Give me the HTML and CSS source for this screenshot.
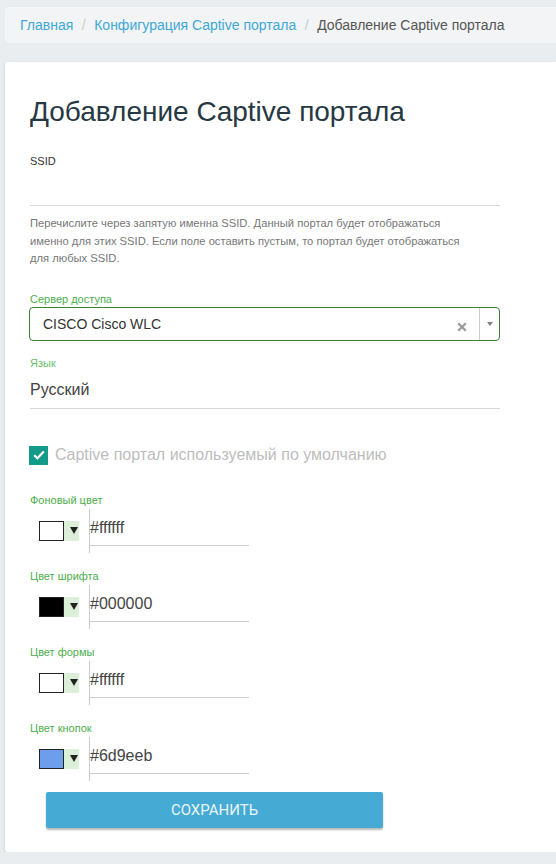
FILE: index.html
```html
<!DOCTYPE html>
<html lang="ru">
<head>
<meta charset="utf-8">
<title>Добавление Captive портала</title>
<link rel="stylesheet" href="styles.css">
</head>
<body>
<nav class="crumbs">
  <a href="#">Главная</a>
  <span class="sep">/</span>
  <a href="#">Конфигурация Captive портала</a>
  <span class="sep">/</span>
  <span class="current">Добавление Captive портала</span>
</nav>

<main class="card">
  <h1 class="title">Добавление Captive портала</h1>

  <div class="field field-ssid">
    <label class="label label-dark">SSID</label>
    <div class="line-input"></div>
    <p class="help">Перечислите через запятую именна SSID. Данный портал будет отображаться именно для этих SSID. Если поле оставить пустым, то портал будет отображаться для любых SSID.</p>
  </div>

  <div class="field field-server">
    <label class="label">Сервер доступа</label>
    <div class="select">
      <span class="select-value">CISCO Cisco WLC</span>
      <span class="select-clear">
        <svg width="10" height="10" viewBox="0 0 10 10"><path d="M1.2 1.2 L8.8 8.8 M8.8 1.2 L1.2 8.8" stroke="#9a9a9a" stroke-width="2.2" fill="none"/></svg>
      </span>
      <span class="select-arrow"><span class="caret"></span></span>
    </div>
  </div>

  <div class="field field-lang">
    <label class="label label-light">Язык</label>
    <div class="line-input lang-value">Русский</div>
  </div>

  <div class="check-row">
    <span class="checkbox">
      <svg width="12" height="10" viewBox="0 0 12 10"><path d="M1.2 5.2 L4.4 8.2 L10.8 1.6" fill="none" stroke="#fff" stroke-width="2.2"/></svg>
    </span>
    <span class="check-label">Captive портал используемый по умолчанию</span>
  </div>

  <div class="color-field">
    <label class="label">Фоновый цвет</label>
    <div class="color-row">
      <div class="picker"><span class="swatch" style="background:#ffffff"></span><span class="picker-btn"><span class="picker-caret"></span></span></div>
      <div class="color-input"><div class="color-value">#ffffff</div></div>
    </div>
  </div>

  <div class="color-field">
    <label class="label">Цвет шрифта</label>
    <div class="color-row">
      <div class="picker"><span class="swatch" style="background:#000000"></span><span class="picker-btn"><span class="picker-caret"></span></span></div>
      <div class="color-input"><div class="color-value">#000000</div></div>
    </div>
  </div>

  <div class="color-field">
    <label class="label">Цвет формы</label>
    <div class="color-row">
      <div class="picker"><span class="swatch" style="background:#ffffff"></span><span class="picker-btn"><span class="picker-caret"></span></span></div>
      <div class="color-input"><div class="color-value">#ffffff</div></div>
    </div>
  </div>

  <div class="color-field">
    <label class="label">Цвет кнопок</label>
    <div class="color-row">
      <div class="picker"><span class="swatch" style="background:#6d9eeb"></span><span class="picker-btn"><span class="picker-caret"></span></span></div>
      <div class="color-input"><div class="color-value">#6d9eeb</div></div>
    </div>
  </div>

  <button class="save" type="button">СОХРАНИТЬ</button>
</main>
</body>
</html>
```

FILE: styles.css
```css
* { box-sizing: border-box; }

html, body {
  margin: 0;
  padding: 0;
}

body {
  background: #e9edf0;
  font-family: "Liberation Sans", Arial, sans-serif;
  color: #333;
  overflow: hidden;
}

/* breadcrumb bar */
.crumbs {
  margin: 7px 0 0 5px;
  height: 36px;
  padding: 0 15px;
  display: flex;
  align-items: center;
  background: #f3f4f5;
  border-radius: 4px 0 0 4px;
  font-size: 14px;
  white-space: nowrap;
}
.crumbs a {
  color: #3ea8d8;
  text-decoration: none;
}
.crumbs .sep {
  color: #ccc;
  padding: 0 8.5px;
}
.crumbs .current {
  color: #555;
}

/* main card */
.card {
  margin: 19px 0 0 5px;
  height: 790px;
  padding: 32px 0 0 25px;
  background: #fff;
  border-radius: 3px 0 0 3px;
  box-shadow: 0 1px 3px rgba(0, 0, 0, 0.15);
}

.title {
  margin: 0;
  font-size: 28px;
  font-weight: normal;
  line-height: 36px;
  color: #263843;
}

.label {
  display: block;
  font-size: 11px;
  line-height: 14px;
  color: #4cae4c;
}
.label-dark { color: #333; }
.label-light { color: #69c16a; }

.field { width: 470px; }

/* SSID */
.field-ssid { margin-top: 24px; }
.line-input {
  border-bottom: 1px solid #d6d6d6;
}
.field-ssid .line-input { height: 38px; }

.help {
  margin: 9px 0 0;
  width: 440px;
  font-size: 11.2px;
  line-height: 17.5px;
  color: #777;
}

/* access server select */
.field-server { margin-top: 24px; }
.select {
  margin-top: 1px;
  margin-left: -1px;
  width: 471px;
  height: 34px;
  border: 1px solid #3b7f3b;
  border-radius: 4px;
  display: flex;
  align-items: center;
}
.select-value {
  flex: 1;
  padding-left: 13px;
  font-size: 14px;
  color: #333;
}
.select-clear {
  width: 35px;
  height: 10px;
  margin-top: 6px;
  display: flex;
  justify-content: flex-start;
  padding-left: 13px;
}
.select-clear svg { display: block; }
.select-arrow {
  width: 20px;
  align-self: stretch;
  border-left: 1px solid #ccc;
  display: flex;
  align-items: center;
  justify-content: center;
}
.caret {
  width: 0;
  height: 0;
  border-left: 3.5px solid transparent;
  border-right: 3.5px solid transparent;
  border-top: 4px solid #808080;
}

/* language */
.field-lang { margin-top: 15px; }
.lang-value {
  height: 39px;
  padding-top: 11px;
  font-size: 16px;
  line-height: 18px;
  color: #444;
}

/* default checkbox */
.check-row {
  margin-top: 37px;
  margin-left: -1px;
  display: flex;
  align-items: center;
  gap: 7px;
}
.checkbox {
  width: 19px;
  height: 19px;
  background: #149a89;
  display: flex;
  align-items: center;
  justify-content: center;
}
.check-label {
  font-size: 16px;
  line-height: 18px;
  color: #bdbdbd;
}

/* colour pickers */
.color-field { margin-top: 28px; }
.color-field + .color-field { margin-top: 16px; }

.color-row {
  display: flex;
  align-items: flex-start;
  margin-top: 2px;
}
.picker {
  margin: 12px 0 0 9px;
  display: flex;
}
.swatch {
  width: 25px;
  height: 20px;
  border: 1px solid #222;
}
.picker-btn {
  width: 15px;
  height: 20px;
  background: #dcefd8;
  display: flex;
  align-items: center;
  padding-left: 6px;
}
.picker-caret {
  width: 0;
  height: 0;
  border-left: 4px solid transparent;
  border-right: 4px solid transparent;
  border-top: 7px solid #222;
}
.color-input {
  margin-left: 10px;
  width: 160px;
  height: 44px;
  border-left: 1px solid #ccc;
}
.color-value {
  height: 37px;
  padding-top: 10px;
  border-bottom: 1px solid #ccc;
  font-size: 16px;
  line-height: 18px;
  color: #444;
}

.save {
  display: block;
  margin: 11px 0 0 16px;
  width: 337px;
  height: 36px;
  border: 0;
  border-radius: 2px;
  background: #45aad4;
  color: #eaf6fb;
  font-family: Roboto, "Liberation Sans", sans-serif;
  font-size: 15px;
  box-shadow: 0 2px 2px rgba(0, 0, 0, 0.28);
}
```
